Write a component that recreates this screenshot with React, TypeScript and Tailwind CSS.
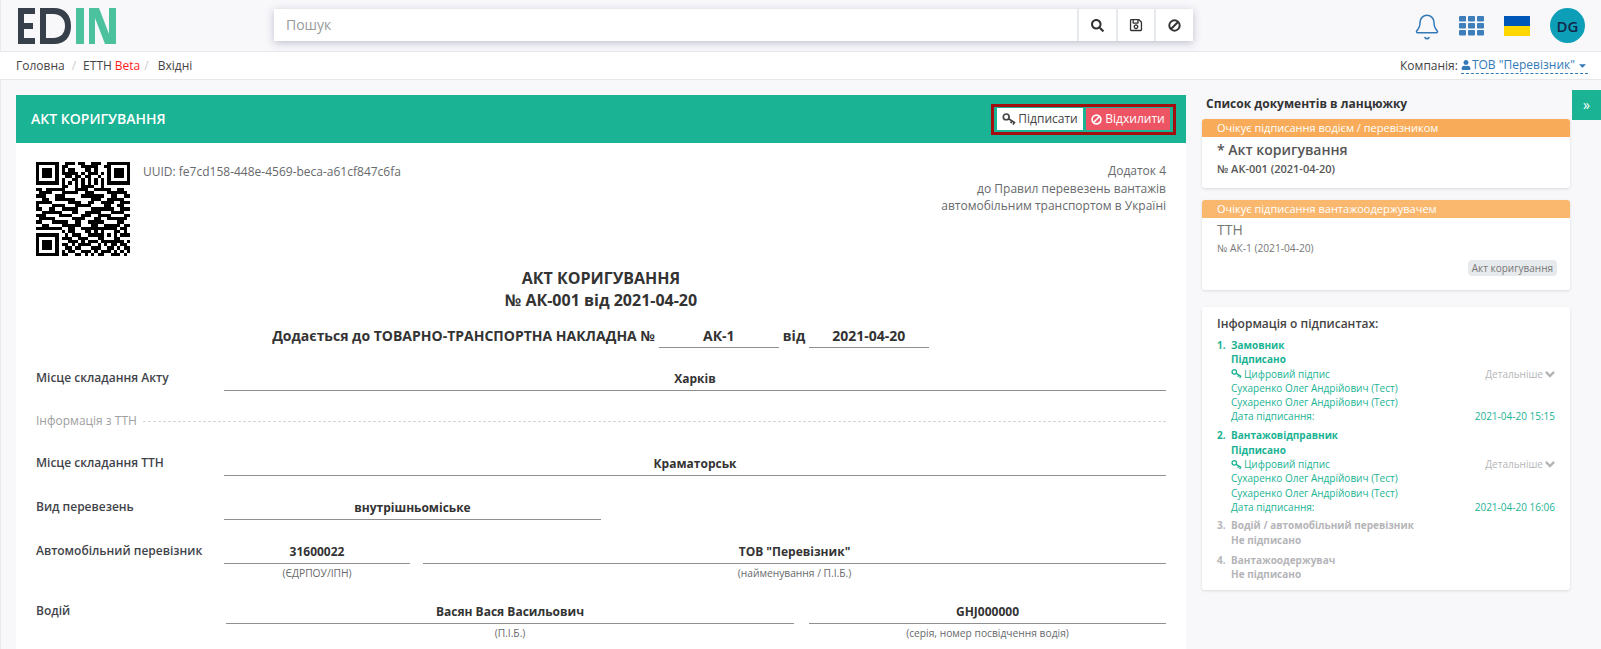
import React from 'react';
import { Bell } from 'lucide-react';
import { FaCaretDown, FaRegSave, FaSearch, FaUser } from 'react-icons/fa';

const QR_ROWS = [
  '11111110011101100111001111111',
  '10000010110000111110011000001',
  '10111010101100011010001011101',
  '10111010111110101110101011101',
  '10111010011011011001001011101',
  '10000010100110101010101000001',
  '11111110101010101010101111111',
  '00000000110010111100100000000',
  '11011111100011110011111001100',
  '01111000111110011100001111110',
  '11100011100000111111100110011',
  '00110011111100000111001111100',
  '11111000001111001100111100111',
  '10000111100011111000011001100',
  '11001100111110000111111100111',
  '00111111000110011111000111100',
  '11100001111000111001111000011',
  '01111100000111100011001111110',
  '11000111110011001111100001100',
  '00110000111111000110011111011',
  '11111111001100111111111110110',
  '00000000101100011010100011010',
  '11111110010111001111101010111',
  '10000010111001110001100011000',
  '10111010001110101110111111101',
  '10111010110101111001010110110',
  '10111010011011000111001101011',
  '10000010101100111010111010101',
  '11111110110011010101100111010',
];

const QrCode = () => (
  <svg width="94" height="94" viewBox="0 0 29 29" shapeRendering="crispEdges" className="shrink-0">
    {QR_ROWS.map((row, y) =>
      row.split('').map((cell, x) =>
        cell === '1' ? <rect key={`${x}-${y}`} x={x} y={y} width="1" height="1" fill="#000" /> : null,
      ),
    )}
  </svg>
);

const Logo = () => (
  <svg width="98" height="36" viewBox="0 0 98 36" className="shrink-0">
    <path d="M0 0H17V6H6V15H15V21H6V30H17V36H0Z" fill="#363f4a" />
    <path
      fillRule="evenodd"
      d="M22 0H36C47 0 53 7 53 18S47 36 36 36H22ZM28 6V30H35C43 30 47 25 47 18S43 6 35 6Z"
      fill="#363f4a"
    />
    <rect x="58" y="0" width="8" height="36" fill="#4cc19d" />
    <rect x="71" y="0" width="6" height="36" fill="#4cc19d" />
    <path d="M77 0H81L91 26V36H87L77 10Z" fill="#4cc19d" />
    <rect x="91" y="0" width="7" height="36" fill="#4cc19d" />
  </svg>
);

const KeyIcon = ({ className }: { className?: string }) => (
  <svg viewBox="0 0 16 16" fill="none" stroke="currentColor" strokeWidth="1.9" className={className}>
    <circle cx="4.8" cy="5.6" r="3.3" />
    <path d="M7.5 7.8L15 12.6M11.2 10.2L10 12.8M13.8 11.8L12.8 14.4" />
  </svg>
);

const BanIcon = ({ className }: { className?: string }) => (
  <svg viewBox="0 0 14 14" fill="none" stroke="currentColor" strokeWidth="2.1" className={className}>
    <circle cx="7" cy="7" r="5.6" />
    <path d="M3.2 10.8L10.8 3.2" />
  </svg>
);

const ChevronIcon = () => (
  <svg viewBox="0 0 11 11" fill="none" stroke="currentColor" strokeWidth="2.6" className="ml-[2px] h-[10px] w-[10px]">
    <path d="M1 3.2L5.5 7.7L10 3.2" />
  </svg>
);

const GridIcon = () => (
  <svg width="25" height="20" viewBox="0 0 25 20" className="shrink-0">
    {[0, 7, 14].map(y =>
      [0, 9, 18].map(x => <rect key={`${x}-${y}`} x={x} y={y} width="7" height="5.5" rx="1" fill="#3d7ebb" />),
    )}
  </svg>
);

const Field = ({ value, caption, className }: { value: string; caption?: string; className: string }) => (
  <div className={className}>
    <div className="h-6 border-b border-[#8f8f8f] text-center text-xs leading-[24px] font-bold text-[#333]">{value}</div>
    {caption && <div className="h-4 text-center text-[10.25px] leading-[18px] text-[#676a6c]">{caption}</div>}
  </div>
);

const FormRow = ({ label, children }: { label: string; children: React.ReactNode }) => (
  <div className="mt-5 flex">
    <div className="w-[188px] shrink-0 text-xs leading-[22px] font-semibold text-[#3f444a]">{label}</div>
    {children}
  </div>
);

const signers = [
  { n: '1.', role: 'Замовник', date: '2021-04-20 15:15', gap: 'mb-[4.7px]' },
  { n: '2.', role: 'Вантажовідправник', date: '2021-04-20 16:06', gap: 'mb-[4px]' },
];

const DocCard = ({
  status,
  headerClass,
  children,
  className,
}: {
  status: string;
  headerClass: string;
  children: React.ReactNode;
  className: string;
}) => (
  <div className={`overflow-hidden rounded-[3px] bg-white shadow-[0_1px_3px_rgba(0,0,0,0.12)] ${className}`}>
    <div className={`h-[18px] pl-[15px] text-[11px] leading-[18px] text-white ${headerClass}`}>{status}</div>
    {children}
  </div>
);

const App = () => {
  return (
    <div className="relative h-screen overflow-hidden bg-[#f8f8fb] font-['Open_Sans',sans-serif] text-xs text-[#676a6c] shadow-[inset_1px_0_0_#e7eaec]">
      <header className="flex h-[52px] items-center border-b border-[#e7e7ec] pr-4 pl-[18px]">
        <Logo />
        <div className="-mt-px ml-[158px] flex h-8 w-[919px] gap-[2px] bg-[#e7eaec] shadow-[0_2px_8px_rgba(60,60,100,0.3)]">
          <input
            placeholder="Пошук"
            className="min-w-0 flex-1 bg-white pl-3 text-sm outline-none placeholder:text-[#9a9a9a]"
          />
          <div className="flex w-[37px] items-center justify-center bg-white text-[#333]">
            <FaSearch size={13} />
          </div>
          <div className="flex w-9 items-center justify-center bg-white text-[#333]">
            <FaRegSave size={14} />
          </div>
          <div className="flex w-[37px] items-center justify-center bg-white text-[#333]">
            <BanIcon className="h-[13px] w-[13px]" />
          </div>
        </div>
        <div className="ml-auto flex items-center">
          <Bell size={28} strokeWidth={1.3} className="mt-[2px] text-[#337ab7]" />
          <div className="ml-[18px]">
            <GridIcon />
          </div>
          <div className="ml-5 h-5 w-[26px]">
            <div className="h-1/2 bg-[#0057b7]" />
            <div className="h-1/2 bg-[#ffd700]" />
          </div>
          <div className="ml-5 flex h-[35px] w-[35px] items-center justify-center rounded-full bg-[#0e9fb8] text-[15px] font-semibold text-[#12264a]">
            DG
          </div>
        </div>
      </header>

      <div className="flex h-7 items-center border-b border-[#e7e7ec] bg-white pr-[13px] pl-4 text-[#444]">
        <span>Головна</span>
        <span className="mx-[7px] text-[#ccc]">/</span>
        <span>ЕТТН</span>
        <span className="ml-[3px] text-[#ff1a1a]">Beta</span>
        <span className="mr-2 ml-[4px] text-[#ccc]">/</span>
        <span className="ml-[1px]">Вхідні</span>
        <div className="ml-auto flex items-center">
          <span>Компанія:</span>
          <span className="ml-[3px] flex items-center border-b border-dashed border-[#337ab7] text-[#337ab7]">
            <FaUser size={10} className="mr-px" />
            ТОВ "Перевізник"
            <FaCaretDown size={11} className="ml-[2px]" />
          </span>
        </div>
      </div>

      <main className="flex pt-[15px] pl-4">
        <section className="min-h-[700px] w-[1170px] shrink-0 bg-white">
          <div className="flex h-12 items-center justify-between bg-[#1ab394] pr-[10px] pl-[15px]">
            <h1 className="text-sm font-semibold text-white">АКТ КОРИГУВАННЯ</h1>
            <div className="flex h-[31px] w-[185px] items-center justify-between border-[3px] border-[#a50e0e] px-[3px]">
              <button className="flex h-[22px] w-[86px] items-center justify-center bg-white text-xs text-[#444]">
                <KeyIcon className="mr-[2px] h-[14px] w-[14px]" />
                Підписати
              </button>
              <button className="flex h-[22px] w-[84px] items-center justify-center bg-[#ed5565] text-xs text-white">
                <BanIcon className="mr-[3px] h-[11px] w-[11px]" />
                Відхилити
              </button>
            </div>
          </div>

          <div className="px-5 pt-[19px]">
            <div className="flex">
              <QrCode />
              <div className="ml-[13px] pt-[1px] leading-[17px]">UUID: fe7cd158-448e-4569-beca-a61cf847c6fa</div>
              <div className="ml-auto text-right leading-[17.5px]">
                <div>Додаток 4</div>
                <div>до Правил перевезень вантажів</div>
                <div>автомобільним транспортом в Україні</div>
              </div>
            </div>

            <div className="mt-[11px] text-center text-base leading-[22px] font-bold text-[#333]">
              <div>АКТ КОРИГУВАННЯ</div>
              <div>№ АК-001 від 2021-04-20</div>
            </div>

            <div className="mt-[13px] flex justify-center pr-[1px]">
              <span className="text-sm leading-6 font-bold text-[#333]">Додається до ТОВАРНО-ТРАНСПОРТНА НАКЛАДНА №</span>
              <Field value="АК-1" className="ml-[4px] w-[120px] [&>div]:text-sm" />
              <span className="mx-1 w-[22px] text-sm leading-6 font-bold text-[#333]">від</span>
              <Field value="2021-04-20" className="w-[120px] [&>div]:text-sm" />
            </div>

            <div className="-mt-px">
              <FormRow label="Місце складання Акту">
                <Field value="Харків" className="flex-1" />
              </FormRow>
              <div className="mt-5 flex h-[21px] items-center pb-px text-[#a0a0a0]">
                <span>Інформація з ТТН</span>
                <div className="ml-[6px] flex-1 border-t border-dashed border-[#d5d5d5]" />
              </div>
              <FormRow label="Місце складання ТТН">
                <Field value="Краматорськ" className="flex-1" />
              </FormRow>
              <FormRow label="Вид перевезень">
                <Field value="внутрішньоміське" className="w-[377px]" />
              </FormRow>
              <FormRow label="Автомобільний перевізник">
                <Field value="31600022" caption="(ЄДРПОУ/ІПН)" className="w-[186px]" />
                <Field value='ТОВ "Перевізник"' caption="(найменування / П.І.Б.)" className="ml-[13px] flex-1" />
              </FormRow>
              <FormRow label="Водій">
                <Field value="Васян Вася Васильович" caption="(П.І.Б.)" className="ml-[2px] w-[568px]" />
                <Field value="GHJ000000" caption="(серія, номер посвідчення водія)" className="ml-[15px] flex-1" />
              </FormRow>
            </div>
          </div>
        </section>

        <aside className="ml-4 w-[368px] shrink-0">
          <h2 className="mb-[6px] h-[18px] pl-1 text-xs leading-[18px] font-bold text-[#333]">Список документів в ланцюжку</h2>

          <DocCard status="Очікує підписання водієм / перевізником" headerClass="bg-[#f8ac59]" className="h-[69px]">
            <div className="pt-[3px] pl-[15px]">
              <div className="text-sm leading-5 font-semibold text-[#555]">* Акт коригування</div>
              <div className="mt-[1px] text-[11px] leading-4 font-semibold text-[#555]">№ АК-001 (2021-04-20)</div>
            </div>
          </DocCard>

          <DocCard status="Очікує підписання вантажоодержувачем" headerClass="bg-[#fab86f]" className="mt-3 h-[90px]">
            <div className="pt-[2px] pr-[13px] pl-[15px]">
              <div className="text-sm leading-5 text-[#777]">ТТН</div>
              <div className="text-[10.2px] leading-4 text-[#777]">№ АК-1 (2021-04-20)</div>
              <div className="mt-[4px] flex justify-end">
                <span className="rounded bg-[#e7eaec] px-1 text-[10px] leading-4 text-[#777]">Акт коригування</span>
              </div>
            </div>
          </DocCard>

          <div className="mt-[17px] h-[283px] rounded-[3px] bg-white px-[15px] pt-[8px] text-[10px] leading-[14.3px] shadow-[0_1px_3px_rgba(0,0,0,0.12)]">
            <div className="mb-[5px] text-xs leading-[18px] font-semibold text-[#444]">Інформація о підписантах:</div>
            {signers.map(s => (
              <div key={s.n} className={`flex text-[#1ab394] ${s.gap}`}>
                <span className="w-[14px] shrink-0 font-bold">{s.n}</span>
                <div className="flex-1">
                  <div className="font-bold">{s.role}</div>
                  <div className="font-bold">Підписано</div>
                  <div className="flex items-center justify-between">
                    <span className="flex items-center">
                      <KeyIcon className="mr-[2px] h-[11px] w-[11px]" />
                      Цифровий підпис
                    </span>
                    <span className="flex items-center text-[#b5b5b8]">
                      Детальніше
                      <ChevronIcon />
                    </span>
                  </div>
                  <div>Сухаренко Олег Андрійович (Тест)</div>
                  <div>Сухаренко Олег Андрійович (Тест)</div>
                  <div className="flex justify-between">
                    <span>Дата підписання:</span>
                    <span>{s.date}</span>
                  </div>
                </div>
              </div>
            ))}
            <div className="mb-[6px] flex font-bold text-[#b5b5b8]">
              <span className="w-[14px] shrink-0">3.</span>
              <div>
                <div>Водій / автомобільний перевізник</div>
                <div>Не підписано</div>
              </div>
            </div>
            <div className="flex font-bold text-[#b5b5b8]">
              <span className="w-[14px] shrink-0">4.</span>
              <div>
                <div>Вантажоодержувач</div>
                <div>Не підписано</div>
              </div>
            </div>
          </div>
        </aside>
      </main>

      <div className="absolute top-[90px] right-0 flex h-[30px] w-[29px] items-center justify-center bg-[#1ab394] text-sm text-white">
        »
      </div>
    </div>
  );
};

export default App;
